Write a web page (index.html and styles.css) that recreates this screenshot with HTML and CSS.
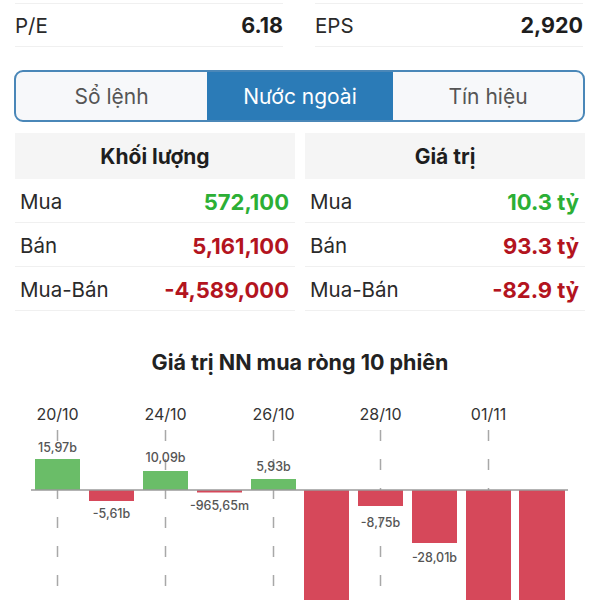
FILE: index.html
```html
<!DOCTYPE html>
<html lang="vi">
<head>
    <meta charset="UTF-8">
    <meta name="viewport" content="width=device-width, initial-scale=1.0">
    <title>Nước ngoài</title>
    <link rel="stylesheet" href="styles.css">
</head>
<body>

    <div class="stats">
        <div class="stat">
            <span class="stat-label">P/E</span>
            <span class="stat-value">6.18</span>
        </div>
        <div class="stat">
            <span class="stat-label">EPS</span>
            <span class="stat-value">2,920</span>
        </div>
    </div>

    <div class="tabs">
        <div class="tab">Sổ lệnh</div>
        <div class="tab active">Nước ngoài</div>
        <div class="tab">Tín hiệu</div>
    </div>

    <div class="tables">
        <div class="table">
            <div class="table-head">Khối lượng</div>
            <div class="row"><span>Mua</span><span class="up">572,100</span></div>
            <div class="row"><span>Bán</span><span class="down">5,161,100</span></div>
            <div class="row"><span>Mua-Bán</span><span class="down">-4,589,000</span></div>
        </div>
        <div class="table">
            <div class="table-head">Giá trị</div>
            <div class="row"><span>Mua</span><span class="up">10.3 tỷ</span></div>
            <div class="row"><span>Bán</span><span class="down">93.3 tỷ</span></div>
            <div class="row"><span>Mua-Bán</span><span class="down">-82.9 tỷ</span></div>
        </div>
    </div>

    <h2 class="chart-title">Giá trị NN mua ròng 10 phiên</h2>

    <!-- toạ độ trong viewBox = toạ độ trên trang -->
    <svg class="chart" viewBox="0 380 600 220" width="600" height="220">
        <g class="grid">
            <line x1="57.5" y1="430" x2="57.5" y2="600"/>
            <line x1="165.5" y1="430" x2="165.5" y2="600"/>
            <line x1="273.5" y1="430" x2="273.5" y2="600"/>
            <line x1="380.5" y1="430" x2="380.5" y2="600"/>
            <line x1="488.5" y1="430" x2="488.5" y2="600"/>
        </g>

        <g class="dates">
            <text x="57.5" y="420">20/10</text>
            <text x="165.5" y="420">24/10</text>
            <text x="273.5" y="420">26/10</text>
            <text x="380.5" y="420">28/10</text>
            <text x="488.5" y="420">01/11</text>
        </g>

        <g class="bars">
            <rect class="pos" x="35" y="459" width="45" height="31"/>
            <rect class="neg" x="89" y="490" width="45" height="11"/>
            <rect class="pos" x="143" y="471" width="45" height="19"/>
            <rect class="neg" x="197" y="490" width="45" height="2.5"/>
            <rect class="pos" x="251" y="479" width="45" height="11"/>
            <rect class="neg" x="304" y="490" width="45" height="120"/>
            <rect class="neg" x="358" y="490" width="45" height="16"/>
            <rect class="neg" x="412" y="490" width="45" height="53"/>
            <rect class="neg" x="466" y="490" width="45" height="120"/>
            <rect class="neg" x="519" y="490" width="46" height="120"/>
        </g>

        <line class="axis" x1="31" y1="490" x2="568" y2="490"/>

        <g class="labels">
            <text x="57.5" y="452">15,97b</text>
            <text x="111.5" y="518">-5,61b</text>
            <text x="165.5" y="462">10,09b</text>
            <text x="219.5" y="510">-965,65m</text>
            <text x="273.5" y="471">5,93b</text>
            <text x="380.5" y="527">-8,75b</text>
            <text x="434.5" y="562">-28,01b</text>
        </g>
    </svg>

</body>
</html>
```

FILE: styles.css
```css
body {
    font-family: 'Inter', 'Roboto', sans-serif;
    margin: 0;
    padding: 0;
    width: 600px;
    height: 600px;
    overflow: hidden;
    background: #fff;
    color: #222;
}

.stats {
    display: grid;
    grid-template-columns: 1fr 1fr;
    column-gap: 32px;
    padding: 0 17px 0 15px;
    margin-top: 3px;
}

.stat {
    display: flex;
    justify-content: space-between;
    align-items: center;
    height: 42px;
    border-top: 1px solid #f0f0f0;
    border-bottom: 1px solid #f0f0f0;
    font-size: 20.5px;
}

.stat-label {
    color: #2a2a2a;
}

.stat-value {
    font-size: 21.5px;
    font-weight: 700;
    color: #1e1e1e;
}

.tabs {
    display: grid;
    grid-template-columns: 191px 186px 1fr;
    margin: 23px 15px 0 14px;
    height: 48px;
    border: 2px solid #4a87b8;
    border-radius: 9px;
    overflow: hidden;
    background: #f7f8fa;
}

.tab {
    display: flex;
    justify-content: center;
    align-items: center;
    font-size: 21px;
    color: #555;
}

.tab.active {
    background: #2b7bb7;
    color: #fff;
}

.tables {
    display: grid;
    grid-template-columns: 1fr 1fr;
    column-gap: 10px;
    padding: 0 15px;
    margin-top: 11px;
}

.table-head {
    display: flex;
    justify-content: center;
    align-items: center;
    height: 46px;
    background: #f5f5f5;
    font-size: 21px;
    font-weight: 700;
    color: #1e1e1e;
}

.row {
    box-sizing: border-box;
    display: flex;
    justify-content: space-between;
    align-items: center;
    height: 44px;
    padding: 2px 6px 0 5px;
    border-bottom: 1px solid #f0f0f0;
    font-size: 20.5px;
    color: #2a2a2a;
}

.row .up,
.row .down {
    font-size: 22px;
    font-weight: 700;
}

.up {
    color: #2caf35;
}

.down {
    color: #b3141e;
}

.chart-title {
    margin: 37px 0 0;
    text-align: center;
    font-size: 21.5px;
    font-weight: 700;
    color: #222;
    line-height: 28px;
}

.chart {
    display: block;
    margin-top: 4px;
}

.grid line {
    stroke: #a8a8a8;
    stroke-width: 1.5;
    stroke-dasharray: 11 18;
}

.dates text {
    font-size: 16px;
    fill: #333;
    text-anchor: middle;
}

.bars .pos {
    fill: #6abd68;
}

.bars .neg {
    fill: #d6485a;
}

.axis {
    stroke: #9a9a9a;
    stroke-width: 1.5;
}

.labels text {
    font-size: 12.5px;
    font-weight: 500;
    fill: #555;
    text-anchor: middle;
}
```
